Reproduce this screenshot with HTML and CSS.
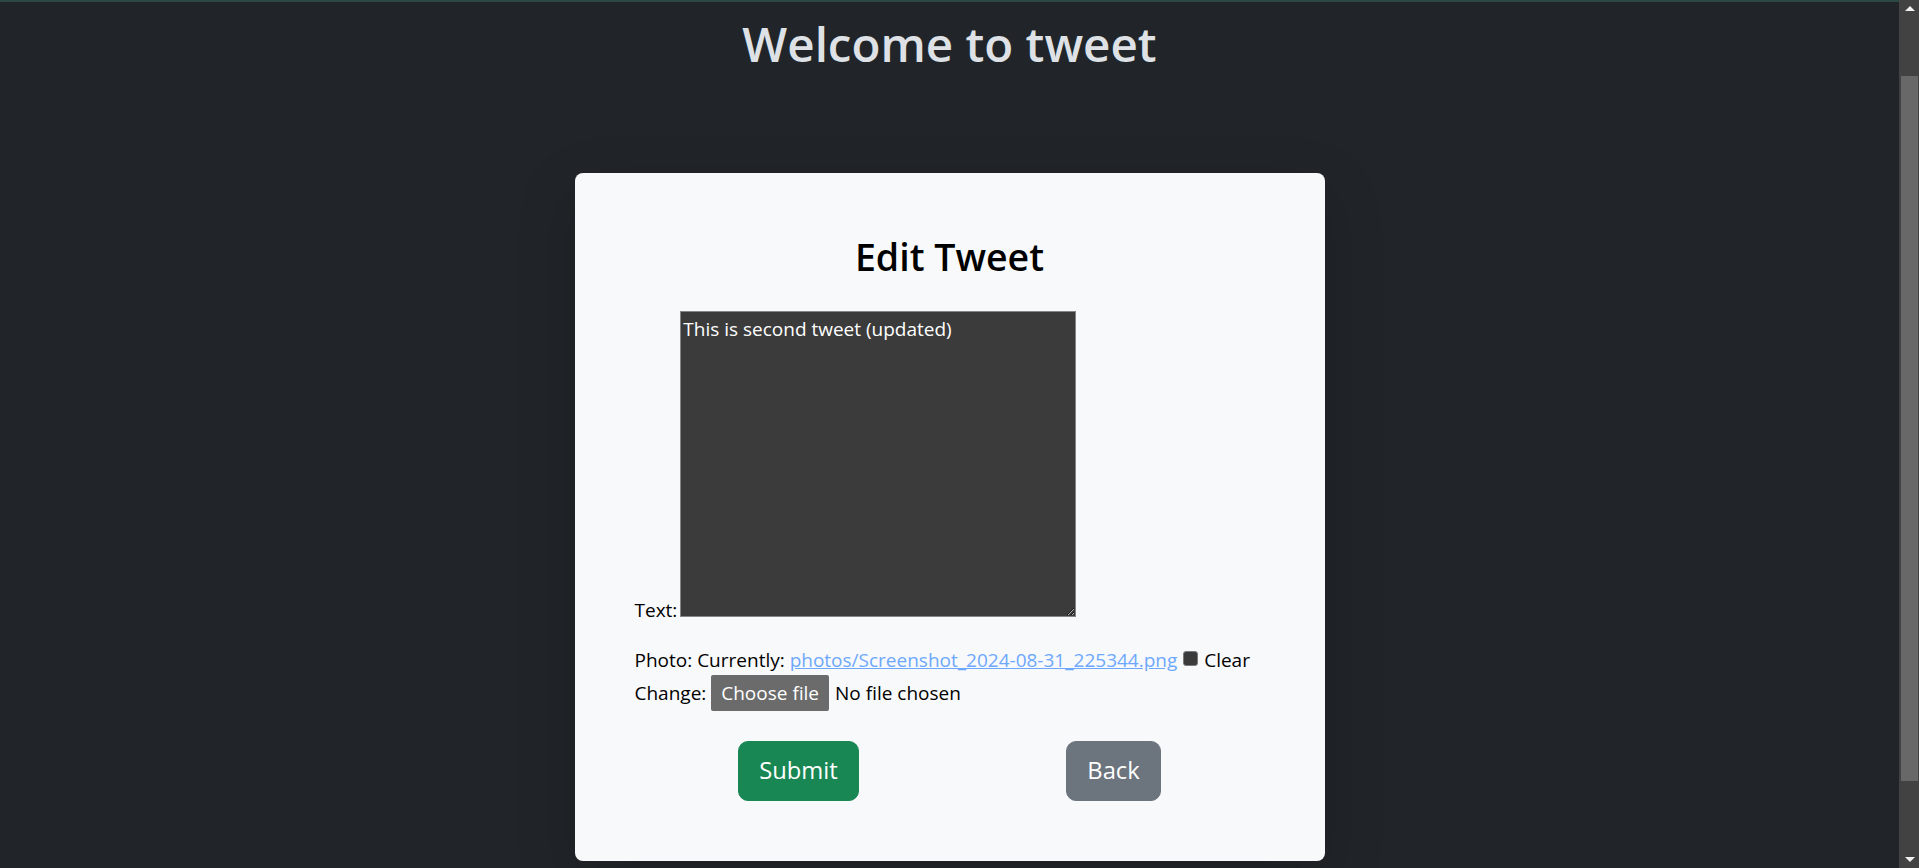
FILE: index.html
```html
<!DOCTYPE html>
<html lang="en">
<head>
<meta charset="utf-8">
<title>Edit Tweet</title>
<link rel="stylesheet" href="styles.css">
</head>
<body>
<div class="viewport">
  <main class="page">
    <h1 class="site-title">Welcome to tweet</h1>
    <section class="card">
      <h2 class="card-title">Edit Tweet</h2>
      <form class="tweet-form">
        <p class="field"><label for="id_text">Text:</label> <textarea id="id_text" class="text-input">This is second tweet (updated)</textarea></p>
        <p class="field"><span class="nowrap"><label for="id_photo">Photo:</label> Currently: <a class="file-link" href="#">photos/Screenshot_2024-08-31_225344.png</a> <input type="checkbox" id="photo-clear" class="clear-box"> <label for="photo-clear">Clear</label></span><br>Change: <input type="file" id="id_photo" class="file-native"><label for="id_photo" class="file-btn">Choose file</label><span class="file-name">No file chosen</span></p>
        <div class="actions">
          <button type="submit" class="btn btn-submit">Submit</button>
          <a class="btn btn-back" href="#">Back</a>
        </div>
      </form>
    </section>
  </main>
</div>
<div class="scrollbar" aria-hidden="true">
  <div class="sb-arrow"><span class="tri-up"></span></div>
  <div class="sb-track"><div class="sb-thumb"></div></div>
  <div class="sb-arrow sb-arrow-down"><span class="tri-down"></span></div>
</div>
</body>
</html>
```

FILE: styles.css
```css
html {
  color-scheme: dark;
}
body {
  margin: 0;
  height: 100vh;
  display: flex;
  overflow: hidden;
  background: #212529;
  font-family: "Open Sans", "Noto Sans", sans-serif;
  font-size: 19px;
  line-height: 30px;
  color: #dee2e6;
}
.viewport {
  flex: 1;
  min-width: 0;
  overflow: hidden;
  border-top: 2px solid #2c4843;
}
.site-title {
  margin: 12px 0 0;
  text-align: center;
  font-size: 47.5px;
  font-weight: 600;
  line-height: 60px;
  color: #dee2e6;
}
.card {
  width: 750px;
  box-sizing: border-box;
  margin: 99px auto 0;
  padding: 60px;
  background: #f8f9fa;
  border-radius: 8px;
  box-shadow: 0 20px 60px rgba(0, 0, 0, 0.175);
  color: #000;
}
.card-title {
  margin: 0 0 30px;
  text-align: center;
  font-size: 37.5px;
  font-weight: 600;
  line-height: 48px;
}
.field {
  margin: 0 0 20px;
}
.nowrap {
  white-space: nowrap;
}
.text-input {
  width: 396px;
  height: 306px;
  box-sizing: border-box;
  margin: 0 0 0 -2px;
  padding: 4px 2px;
  font: inherit;
  line-height: normal;
  vertical-align: baseline;
  background: #3b3b3b;
  color: #fff;
  border: 1px solid #858585;
}
.file-link {
  color: #6ea8fe;
  text-decoration: underline;
}
.clear-box {
  appearance: none;
  width: 15px;
  height: 15px;
  box-sizing: border-box;
  margin: 0 1px 1px 1px;
  vertical-align: baseline;
  background: #3b3b3b;
  border: 1px solid #7a7a7a;
  border-radius: 3px;
}
.file-native {
  display: none;
}
.file-btn {
  display: inline-block;
  padding: 3px 10px;
  margin-right: 6px;
  line-height: 30px;
  border-radius: 2px;
  background: #6b6b6b;
  color: #fff;
}
.actions {
  display: flex;
  justify-content: space-around;
  margin-top: 30px;
}
.btn {
  font-family: inherit;
  font-size: 23.75px;
  font-weight: 400;
  line-height: 37.5px;
  padding: 10px 20px;
  border: 1.25px solid transparent;
  border-radius: 10px;
  color: #fff;
  text-decoration: none;
}
.btn-submit {
  background: #198754;
  border-color: #198754;
}
.btn-back {
  background: #6c757d;
  border-color: #6c757d;
}
.scrollbar {
  width: 20px;
  flex: none;
  display: flex;
  flex-direction: column;
  background: #424242;
}
.sb-arrow {
  height: 17px;
  display: flex;
  justify-content: center;
  align-items: center;
  padding-left: 1px;
}
.sb-track {
  flex: 1;
  padding: 59px 1px 0 2px;
}
.sb-thumb {
  height: 705px;
  background: #686868;
}
.tri-up {
  width: 0;
  height: 0;
  border-left: 5px solid transparent;
  border-right: 5px solid transparent;
  border-bottom: 5px solid #f0f0f0;
}
.tri-down {
  width: 0;
  height: 0;
  border-left: 5px solid transparent;
  border-right: 5px solid transparent;
  border-top: 5px solid #f0f0f0;
}
```
